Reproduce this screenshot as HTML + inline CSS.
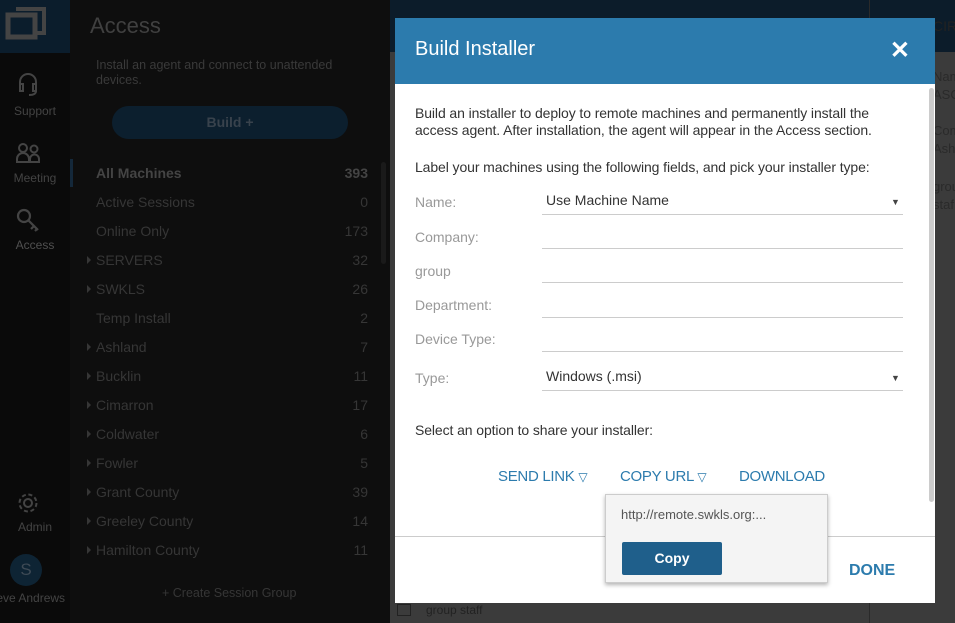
<!DOCTYPE html>
<html><head><style>
*{margin:0;padding:0;box-sizing:border-box}
body{width:955px;height:623px;overflow:hidden;background:#3b3b3b;font-family:"Liberation Sans",sans-serif;position:relative}
.rail{position:absolute;left:0;top:0;width:70px;height:623px;background:#0a0a0a}
.logo{position:absolute;left:0;top:0;width:70px;height:53px;background:#0b1d2c}
.ri{position:absolute;width:70px;text-align:center;color:#444;font-size:12px}
.side{position:absolute;left:70px;top:0;width:320px;height:623px;background:#0e0e0e}
.item{position:absolute;left:26px;width:272px;font-size:14px;color:#363636}
.item span{position:absolute;right:0}
.item i{position:absolute;left:-9px;top:4px;border-left:4px solid #363636;border-top:4px solid transparent;border-bottom:4px solid transparent}
.topbar{position:absolute;left:390px;top:0;width:565px;height:52px;background:#0c1c2a}
.modal{position:absolute;left:395px;top:18px;width:540px;height:585px;background:#fff}
.mh{height:66px;background:#2c7bad;color:#fff;font-size:20px;padding:20px 0 0 20px;position:relative}
.x{position:absolute;right:25px;top:18px;font-size:24px;font-weight:bold}
.body{font-size:14px;color:#333;line-height:17px;letter-spacing:-0.1px}
.lbl{position:absolute;left:20px;color:#999;font-size:14px}
.fld{position:absolute;left:147px;width:361px;height:1px;background:#ccc}
.val{position:absolute;left:151px;color:#333;font-size:14px}
.arr{position:absolute;left:496px;font-size:9px;color:#444}
.lnk{position:absolute;top:450px;color:#2c7bad;font-size:15px;letter-spacing:-0.3px}
.lnk small{font-size:12px}
</style></head><body>
<div class="rail">
 <div class="logo"><svg width="70" height="53"><rect x="8" y="15" width="27" height="22" fill="none" stroke="#444" stroke-width="5"/><path d="M16 9 H44 V33 H37" fill="none" stroke="#444" stroke-width="4"/></svg></div>
 <svg style="position:absolute;left:16px;top:72px" width="24" height="26"><path d="M4 14 V10 A8 8 0 0 1 20 10 V14 M4 12 h3 v7 h-3 z M17 12 h3 v7 h-3z M20 19 q0 4 -7 4" fill="none" stroke="#444" stroke-width="2"/></svg>
 <div class="ri" style="top:104px">Support</div>
 <svg style="position:absolute;left:16px;top:143px" width="26" height="20"><circle cx="7" cy="5" r="4" fill="none" stroke="#444" stroke-width="2"/><circle cx="18" cy="6" r="3.5" fill="none" stroke="#444" stroke-width="2"/><path d="M1 19 v-3 a5 5 0 0 1 12 0 v3z M14 19 v-3 a4 4 0 0 1 9 0 v3z" fill="none" stroke="#444" stroke-width="2"/></svg>
 <div class="ri" style="top:171px">Meeting</div>
 <svg style="position:absolute;left:16px;top:208px" width="26" height="26"><circle cx="8" cy="8" r="6" fill="none" stroke="#444" stroke-width="2.2"/><path d="M12 12 L22 22 M18 18 l-3 3 M21 21 l-2 2" stroke="#444" stroke-width="2.2"/></svg>
 <div class="ri" style="top:238px;color:#505050">Access</div>
 <svg style="position:absolute;left:16px;top:491px" width="24" height="24"><circle cx="12" cy="12" r="4" fill="none" stroke="#444" stroke-width="2"/><circle cx="12" cy="12" r="8.5" fill="none" stroke="#444" stroke-width="2" stroke-dasharray="4 2.7"/></svg>
 <div class="ri" style="top:520px">Admin</div>
 <div style="position:absolute;left:10px;top:554px;width:32px;height:32px;border-radius:50%;background:#0e2434;color:#3e4a55;font-size:17px;text-align:center;line-height:32px">S</div>
 <div class="ri" style="top:591px;left:-15px;width:85px;text-align:left;white-space:nowrap">Steve Andrews</div>
</div>
<div class="side">
 <div style="position:absolute;left:20px;top:13px;font-size:22px;color:#404040">Access</div>
 <div style="position:absolute;left:26px;top:58px;font-size:12.5px;color:#3a3a3a;line-height:15px">Install an agent and connect to unattended<br>devices.</div>
 <div style="position:absolute;left:42px;top:106px;width:236px;height:33px;border-radius:17px;background:#0c1f2e;color:#38424c;font-size:14px;font-weight:bold;text-align:center;line-height:33px">Build +</div>
 <div style="position:absolute;left:0;top:159px;width:3px;height:28px;background:#14283a"></div>
 <div style="position:absolute;left:311px;top:162px;width:5px;height:102px;border-radius:3px;background:#1a1a1a"></div>
 <div class="item" style="top:165px;color:#444;font-weight:bold">All Machines<span>393</span></div>
 <div class="item" style="top:194px">Active Sessions<span>0</span></div>
 <div class="item" style="top:223px">Online Only<span>173</span></div>
 <div class="item" style="top:252px"><i></i>SERVERS<span>32</span></div>
 <div class="item" style="top:281px"><i></i>SWKLS<span>26</span></div>
 <div class="item" style="top:310px">Temp Install<span>2</span></div>
 <div class="item" style="top:339px"><i></i>Ashland<span>7</span></div>
 <div class="item" style="top:368px"><i></i>Bucklin<span>11</span></div>
 <div class="item" style="top:397px"><i></i>Cimarron<span>17</span></div>
 <div class="item" style="top:426px"><i></i>Coldwater<span>6</span></div>
 <div class="item" style="top:455px"><i></i>Fowler<span>5</span></div>
 <div class="item" style="top:484px"><i></i>Grant County<span>39</span></div>
 <div class="item" style="top:513px"><i></i>Greeley County<span>14</span></div>
 <div class="item" style="top:542px"><i></i>Hamilton County<span>11</span></div>
 <div style="position:absolute;left:92px;top:586px;font-size:12.5px;color:#363636">+ Create Session Group</div>
</div>
<div class="topbar"></div>
<div style="position:absolute;left:869px;top:0;width:1px;height:623px;background:#2a2a2a"></div>
<div style="position:absolute;left:933px;top:18px;font-size:14px;color:#222">CIRC</div>
<div style="position:absolute;left:933px;top:68px;font-size:13px;color:#2a2a2a;line-height:18px">Nam<br>ASC</div>
<div style="position:absolute;left:933px;top:122px;font-size:13px;color:#2a2a2a;line-height:18px">Com<br>Ash</div>
<div style="position:absolute;left:933px;top:178px;font-size:13px;color:#2a2a2a;line-height:18px">grou<br>staf</div>
<div class="modal">
 <div class="mh">Build Installer<span class="x">✕</span></div>
 <div style="position:absolute;left:534px;top:70px;width:5px;height:414px;background:#ccc;border-radius:3px"></div>
 <div class="body" style="position:absolute;left:20px;top:87px;width:480px">Build an installer to deploy to remote machines and permanently install the access agent. After installation, the agent will appear in the Access section.</div>
 <div class="body" style="position:absolute;left:20px;top:141px">Label your machines using the following fields, and pick your installer type:</div>
 <div class="lbl" style="top:176px">Name:</div><div class="val" style="top:174px">Use Machine Name</div><div class="arr" style="top:179px">▼</div><div class="fld" style="top:196px"></div>
 <div class="lbl" style="top:211px">Company:</div><div class="fld" style="top:230px"></div>
 <div class="lbl" style="top:245px">group</div><div class="fld" style="top:264px"></div>
 <div class="lbl" style="top:279px">Department:</div><div class="fld" style="top:299px"></div>
 <div class="lbl" style="top:313px">Device Type:</div><div class="fld" style="top:333px"></div>
 <div class="lbl" style="top:352px">Type:</div><div class="val" style="top:350px">Windows (.msi)</div><div class="arr" style="top:355px">▼</div><div class="fld" style="top:372px"></div>
 <div class="body" style="position:absolute;left:20px;top:404px">Select an option to share your installer:</div>
 <div class="lnk" style="left:103px">SEND LINK <small>▽</small></div>
 <div class="lnk" style="left:225px">COPY URL <small>▽</small></div>
 <div class="lnk" style="left:344px">DOWNLOAD</div>
 <div style="position:absolute;left:0;top:518px;width:540px;height:1px;background:#ccc"></div>
 <div style="position:absolute;left:454px;top:544px;color:#2c7bad;font-size:16px;font-weight:bold">DONE</div>
</div>
<div style="position:absolute;left:605px;top:494px;width:223px;height:89px;background:#f4f4f4;border:1px solid #ccc;box-shadow:0 2px 4px rgba(0,0,0,.3)">
 <div style="position:absolute;left:15px;top:12px;font-size:13px;color:#555">http://remote.swkls.org:...</div>
 <div style="position:absolute;left:16px;top:47px;width:100px;height:33px;background:#1f5f8b;border-radius:2px;color:#fff;font-size:14px;font-weight:bold;text-align:center;line-height:33px">Copy</div>
</div>
<div style="position:absolute;left:397px;top:604px;width:14px;height:12px;border:1px solid #222"></div>
<div style="position:absolute;left:426px;top:603px;font-size:12px;color:#222;line-height:15px">group staff</div>
</body></html>
